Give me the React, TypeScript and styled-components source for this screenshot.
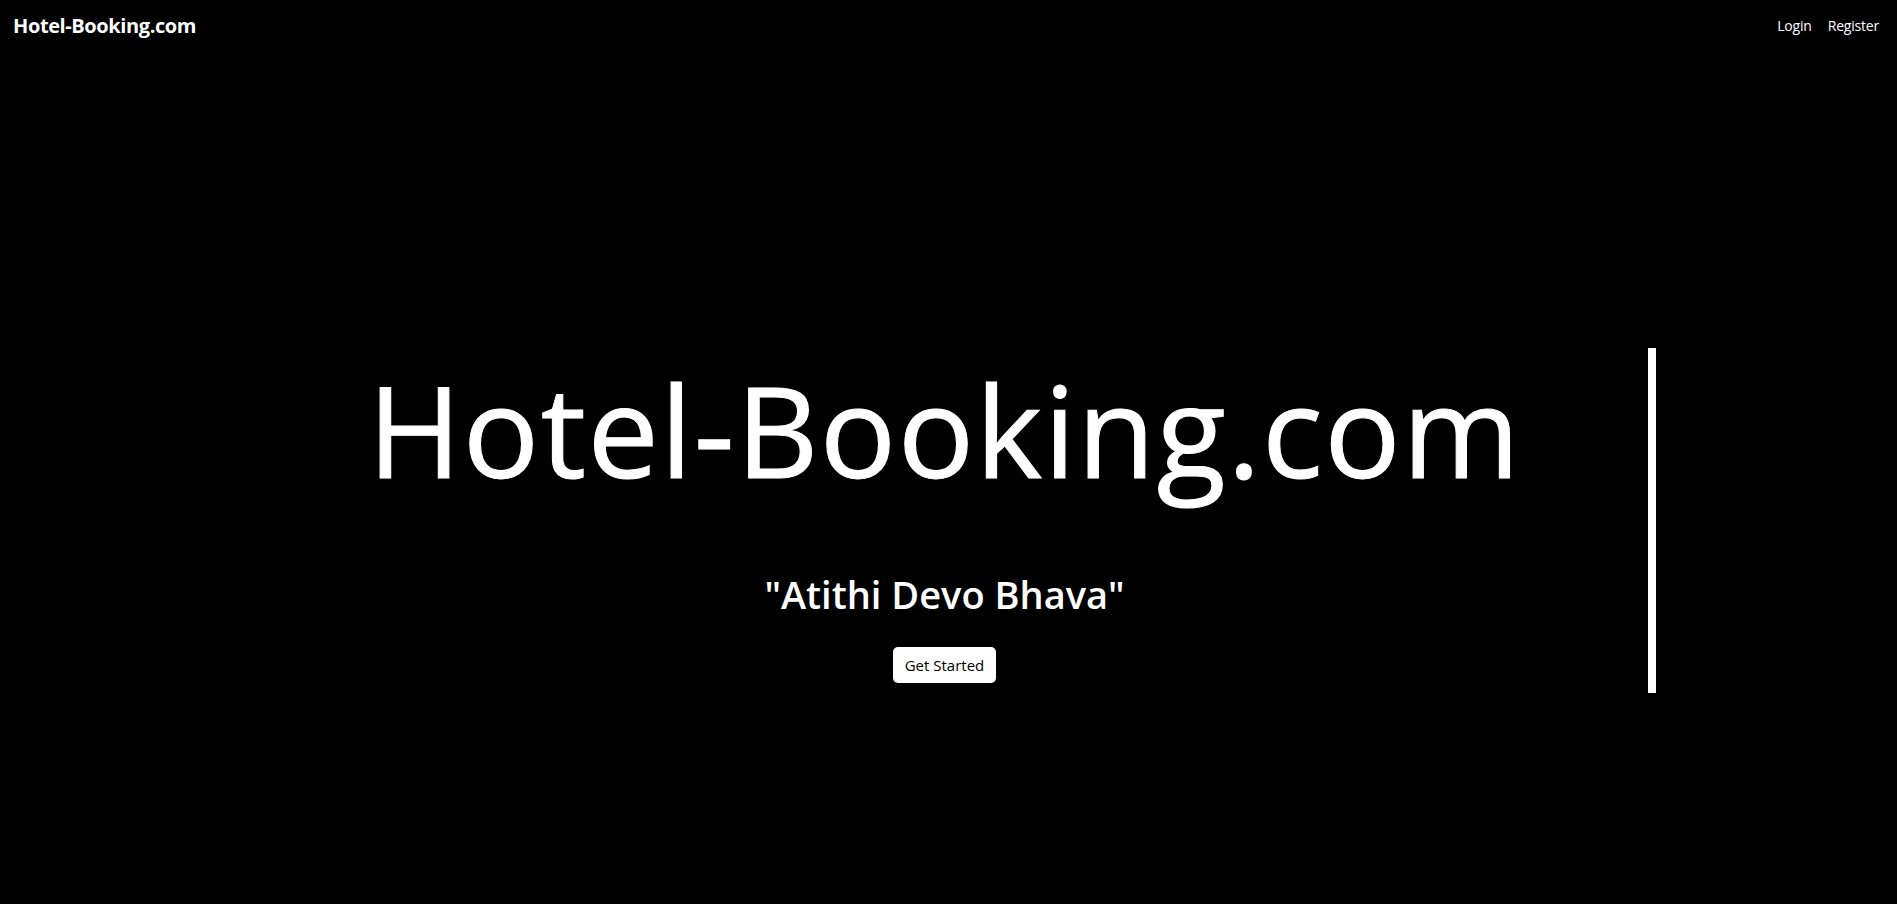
import React from "react";
import styled, { createGlobalStyle } from "styled-components";

const GlobalStyle = createGlobalStyle`
  html, body {
    margin: 0;
    padding: 0;
    background: #000;
  }
  body {
    font-family: "Open Sans", "Noto Sans", sans-serif;
    color: #fff;
    min-height: 904px;
  }
  * { box-sizing: border-box; }
`;

const Page = styled.div`
  min-height: 904px;
  background: #000;
`;

const Nav = styled.nav`
  display: flex;
  justify-content: space-between;
  align-items: flex-start;
  padding: 14px 18px 0 13px;
`;

const Brand = styled.a`
  font-size: 20px;
  font-weight: 700;
  line-height: 24px;
  color: #fff;
  text-decoration: none;
  letter-spacing: -0.4px;
`;

const NavLinks = styled.div`
  display: flex;
  gap: 16px;
  margin-top: 3px;
`;

const NavLink = styled.a`
  font-size: 14px;
  line-height: 17px;
  color: #fff;
  text-decoration: none;
  letter-spacing: -0.2px;
`;

const Hero = styled.section`
  width: 1414px;
  height: 345px;
  margin: 310px auto 0;
  border-right: 8px solid #fff;
  display: flex;
  flex-direction: column;
  align-items: center;
  padding-top: 5px;
`;

const Title = styled.h1`
  margin: 0;
  font-size: 127px;
  font-weight: 400;
  line-height: 151px;
  letter-spacing: 1.5px;
  color: #fff;
  -webkit-text-stroke: 1px #fff;
`;

const Tagline = styled.h2`
  margin: 67px 0 0;
  font-size: 38px;
  font-weight: 600;
  line-height: 46px;
  color: #fff;
`;

const CTA = styled.button`
  margin-top: 30px;
  height: 36px;
  padding: 0 12px;
  background: #fff;
  color: #000;
  border: none;
  border-radius: 5px;
  font-family: "Open Sans", "Noto Sans", sans-serif;
  font-size: 15px;
  cursor: pointer;
`;

export default function App() {
  return (
    <Page>
      <GlobalStyle />
      <Nav>
        <Brand href="#">Hotel-Booking.com</Brand>
        <NavLinks>
          <NavLink href="#">Login</NavLink>
          <NavLink href="#">Register</NavLink>
        </NavLinks>
      </Nav>
      <Hero>
        <Title>Hotel-Booking.com</Title>
        <Tagline>"Atithi Devo Bhava"</Tagline>
        <CTA>Get Started</CTA>
      </Hero>
    </Page>
  );
}
